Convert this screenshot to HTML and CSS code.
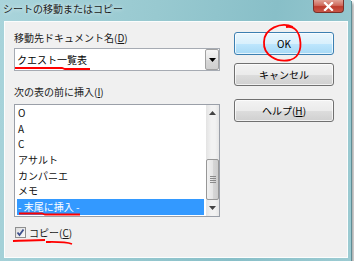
FILE: index.html
```html
<!DOCTYPE html>
<html lang="ja">

<head>
    <meta charset="UTF-8">
    <meta name="viewport" content="width=device-width, initial-scale=1.0">
    <title>シートの移動またはコピー</title>
    <link rel="stylesheet" href="styles.css">
</head>

<body>
<div class="window">
    <div class="titlebar">
        <span class="title">シートの移動またはコピー</span>
        <span class="close">
            <svg width="11" height="9" viewBox="0 0 11 9">
                <path d="M2 1 L9 8 M9 1 L2 8" stroke="#fff" stroke-width="2.2" stroke-linecap="square"/>
            </svg>
        </span>
    </div>

    <div class="client">
        <div class="left-col">
            <div class="label">移動先ドキュメント名(<u>D</u>)</div>
            <div class="combo">
                <span class="combo-text">クエスト一覧表</span>
                <span class="combo-btn">
                    <svg width="7" height="4" viewBox="0 0 7 4"><path d="M0 0 H7 L3.5 4 Z" fill="#000"/></svg>
                </span>
            </div>

            <div class="label label-list">次の表の前に挿入(<u>I</u>)</div>
            <div class="listbox">
                <ul class="items">
                    <li>O</li>
                    <li>A</li>
                    <li>C</li>
                    <li>アサルト</li>
                    <li>カンパニエ</li>
                    <li>メモ</li>
                    <li class="selected">- 末尾に挿入 -</li>
                </ul>
                <div class="scrollbar">
                    <div class="sb-btn">
                        <svg width="7" height="4" viewBox="0 0 7 4"><path d="M0 4 H7 L3.5 0 Z" fill="#444"/></svg>
                    </div>
                    <div class="sb-track">
                        <div class="sb-thumb">
                            <svg width="6" height="7" viewBox="0 0 6 7">
                                <path d="M0 0.5 H6 M0 2.5 H6 M0 4.5 H6 M0 6.5 H6" stroke="#8a8a8a" stroke-width="1"/>
                            </svg>
                        </div>
                    </div>
                    <div class="sb-btn">
                        <svg width="7" height="4" viewBox="0 0 7 4"><path d="M0 0 H7 L3.5 4 Z" fill="#444"/></svg>
                    </div>
                </div>
            </div>

            <div class="check-row">
                <span class="checkbox">
                    <svg width="9" height="9" viewBox="0 0 9 9">
                        <path d="M1.5 4.5 L3.5 7 L7.5 1.5" fill="none" stroke="#3d4f8c" stroke-width="1.8"/>
                    </svg>
                </span>
                <span>コピー(<u>C</u>)</span>
            </div>
        </div>

        <div class="buttons">
            <button class="btn btn-default">OK</button>
            <button class="btn">キャンセル</button>
            <button class="btn btn-help">ヘルプ(<u>H</u>)</button>
        </div>
    </div>
</div>

<!-- red pen marks on top of the screenshot -->
<svg class="marks" width="354" height="264" viewBox="0 0 354 264">
    <path d="M293 27 C281 21, 264 29, 264 42 C263 55, 277 63, 290 60 C301 57, 302 45, 299 35 C297 29, 292 26, 286 27" fill="none" stroke="#ff0000" stroke-width="1.8"/>
    <path d="M15 68 L62 68 L65 69 L90 69" fill="none" stroke="#ff0000" stroke-width="1.8"/>
    <path d="M19 213.5 L42 213.5 L45 214.5 L80 214.5" fill="none" stroke="#ff0000" stroke-width="1.8"/>
    <path d="M13 241 C25 240.5, 38 240, 45 240 M46 242 C55 242, 65 241.5, 72 244" fill="none" stroke="#ff0000" stroke-width="1.8"/>
</svg>
</body>

</html>
```

FILE: styles.css
```css
body {
    margin: 0;
    background-color: #fff;
    font-family: "Noto Sans CJK JP", "Noto Sans", sans-serif;
    font-size: 10px;
    color: #1a1a1a;
}

.window {
    display: flex;
    flex-direction: column;
    width: 351px;
    height: 261px;
    background: linear-gradient(100deg, #a9d4db 0%, #98c9d0 40%, #88bfc8 70%, #9ccbd2 100%);
    box-shadow: 1px 1px 0 #5f8d95, 3px 3px 3px rgba(0, 0, 0, 0.35);
}

.titlebar {
    display: flex;
    justify-content: space-between;
    align-items: flex-start;
    height: 21px;
    padding-left: 3px;
}

.title {
    margin-top: 3px;
    line-height: 12px;
    color: #1c1c1c;
    text-shadow: 0 0 4px rgba(255, 255, 255, 0.9);
}

.close {
    display: flex;
    align-items: center;
    justify-content: center;
    width: 31px;
    height: 13px;
    margin-right: 7px;
    box-sizing: border-box;
    border: 1px solid #7a3029;
    border-top: none;
    border-radius: 0 0 4px 4px;
    background: linear-gradient(#e0a296 0%, #d06a5c 45%, #bd3b2c 55%, #c9584a 100%);
}

.client {
    flex: 1;
    display: flex;
    margin: 0 3px 3px 4px;
    padding: 9px 12px 0 9px;
    border: 1px solid #fbfdfd;
    background-color: #f0f0f0;
}

/* left side: combo, list, checkbox */
.left-col {
    width: 206px;
}

.label {
    height: 14px;
    line-height: 14px;
}

.label-list {
    margin-top: 14px;
}

.combo {
    display: flex;
    align-items: center;
    height: 23px;
    margin-top: 3px;
    box-sizing: border-box;
    border: 1px solid #a6abb3;
    background-color: #fff;
}

.combo-text {
    flex: 1;
    padding-left: 2px;
    color: #000;
}

.combo-btn {
    display: flex;
    align-items: center;
    justify-content: center;
    width: 14px;
    height: 21px;
    box-sizing: border-box;
    border: 1px solid #a2a2a2;
    border-radius: 2px;
    background: linear-gradient(#f4f4f4, #e6e6e6 50%, #d8d8d8 51%, #cfcfcf);
}

.listbox {
    display: flex;
    height: 113px;
    margin-top: 5px;
    box-sizing: border-box;
    border: 1px solid #9a9fa8;
    background-color: #fff;
}

.items {
    flex: 1;
    margin: 0;
    padding: 0 2px;
    list-style: none;
}

.items li {
    height: 15.67px;
    line-height: 15.67px;
    padding-left: 1px;
    color: #111;
}

.items .selected {
    background-color: #3399ff;
    color: #fff;
}

.scrollbar {
    display: flex;
    flex-direction: column;
    width: 13px;
    background: linear-gradient(90deg, #e3e3e3, #f2f2f2 40%, #f2f2f2 70%, #e6e6e6);
}

.sb-btn {
    display: flex;
    align-items: center;
    justify-content: center;
    height: 16px;
}

.sb-track {
    flex: 1;
    display: flex;
    flex-direction: column;
    justify-content: flex-end;
}

.sb-thumb {
    display: flex;
    align-items: center;
    justify-content: center;
    height: 41px;
    box-sizing: border-box;
    border: 1px solid #979797;
    border-radius: 2px;
    background: linear-gradient(90deg, #f1f1f1, #e6e6e6 50%, #d7d7d7 51%, #cdcdcd);
}

.check-row {
    display: flex;
    align-items: center;
    gap: 3px;
    height: 12px;
    margin-top: 9px;
    margin-left: 1px;
}

.checkbox {
    display: flex;
    align-items: center;
    justify-content: center;
    width: 11px;
    height: 11px;
    box-sizing: border-box;
    border: 1px solid #8e8f8f;
    background: linear-gradient(135deg, #dcdcdc, #fbfbfb);
}

/* right side buttons */
.buttons {
    display: flex;
    flex-direction: column;
    width: 100px;
    margin-left: 14px;
    margin-top: 1px;
}

.btn {
    height: 23px;
    margin-bottom: 8px;
    padding: 0;
    border: 1px solid #707070;
    border-radius: 3px;
    background: linear-gradient(#f3f3f3 0%, #ebebeb 50%, #dddddd 51%, #d0d0d0 100%);
    box-shadow: inset 0 0 0 1px rgba(255, 255, 255, 0.7);
    font: inherit;
    color: #000;
}

.btn-default {
    border-color: #3c7fb1;
    background: linear-gradient(#eaf6fd 0%, #d9f0fc 50%, #bee6fd 51%, #a7d9f5 100%);
}

.btn-help {
    margin-top: 5px;
}

.marks {
    position: absolute;
    top: 0;
    left: 0;
    pointer-events: none;
}
```
